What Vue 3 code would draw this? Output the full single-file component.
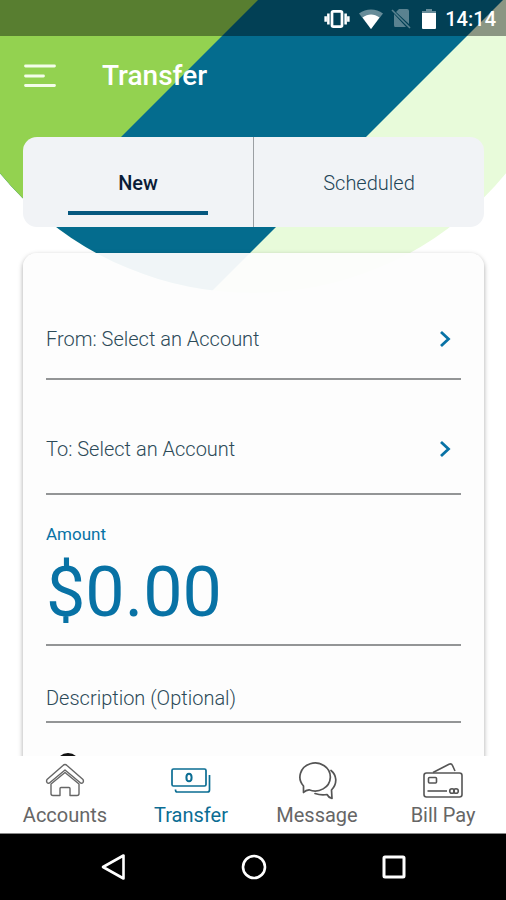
<script setup>
import { ref } from 'vue'

const mode = ref('new')
const amount = ref('$0.00')
const description = ref('')
</script>

<template>
  <div class="screen">
    <svg class="backdrop" viewBox="0 0 506 300" aria-hidden="true">
      <defs>
        <clipPath id="dome"><circle cx="253" cy="-34" r="327" /></clipPath>
      </defs>
      <g clip-path="url(#dome)">
        <rect width="506" height="300" fill="#e8fbda" />
        <path d="M0 0H503L203 300H0Z" fill="#046c8e" />
        <path d="M0 0H258L0 258Z" fill="#93d250" />
      </g>
    </svg>

    <div class="status">
      <svg class="s-vibrate" viewBox="0 0 28 22" aria-hidden="true">
        <rect x="8.500" y="2.500" width="11" height="17" rx="1.500" fill="none" stroke="#fff" stroke-width="3" />
        <path d="M4.500 5v12M23.500 5v12M1.500 8v6M26.500 8v6" stroke="#fff" stroke-width="2.800" />
      </svg>
      <svg class="s-wifi" viewBox="0 0 24 20" aria-hidden="true">
        <path d="M0 4.500C7-1 17-1 24 4.500L12 20Z" fill="#fff" opacity=".4" />
        <path d="M3.500 8.500C9 4.500 15 4.500 20.500 8.500L12 20Z" fill="#fff" />
      </svg>
      <svg class="s-sim" viewBox="0 0 20 22" aria-hidden="true">
        <path d="M8 1h8q2 0 2 2v13L5 4ZM3 6L15 19H4q-1 0-1-2Z" fill="#fff" opacity=".35" />
        <path d="M1 2L19 20" stroke="#fff" stroke-width="1.600" opacity=".35" />
      </svg>
      <svg class="s-battery" viewBox="0 0 14 20" aria-hidden="true">
        <path d="M4 0h6v2h4v3H0V2h4Z" fill="#fff" opacity=".4" />
        <path d="M0 4h14v15q0 1-1 1H1q-1 0-1-1Z" fill="#fff" />
      </svg>
      <span>14:14</span>
    </div>

    <header class="bar">
      <button class="menu" type="button" aria-label="Menu">
        <svg viewBox="0 0 32 24" aria-hidden="true">
          <path d="M1.500 2H30.500M1.500 12H19.500M1.500 21.500H30.500" stroke="#f4fde9" stroke-width="2.800" stroke-linecap="round" />
        </svg>
      </button>
      <h1>Transfer</h1>
    </header>

    <div class="tabs" role="tablist">
      <button type="button" role="tab" :aria-selected="mode === 'new'" @click="mode = 'new'"><span>New</span></button>
      <button type="button" role="tab" :aria-selected="mode === 'scheduled'" @click="mode = 'scheduled'"><span>Scheduled</span></button>
    </div>

    <main class="scroll">
      <form class="card" @submit.prevent>
        <button class="pick from" type="button">
          <span>From: Select an Account</span>
          <svg viewBox="0 0 12 18" aria-hidden="true"><path d="M2 2L9.500 9L2 16" fill="none" stroke="#0872a5" stroke-width="2.800" /></svg>
        </button>
        <button class="pick to" type="button">
          <span>To: Select an Account</span>
          <svg viewBox="0 0 12 18" aria-hidden="true"><path d="M2 2L9.500 9L2 16" fill="none" stroke="#0872a5" stroke-width="2.800" /></svg>
        </button>
        <div class="amount">
          <label for="amount">Amount</label>
          <input id="amount" v-model="amount" type="text" inputmode="decimal" />
        </div>
        <input v-model="description" class="description" type="text" placeholder="Description (Optional)" aria-label="Description (Optional)" />
        <div class="frequency">
          <svg viewBox="0 0 24 24" aria-hidden="true"><circle cx="12" cy="12" r="10.500" fill="none" stroke="#111" stroke-width="3" /></svg>
        </div>
      </form>
    </main>

    <nav class="tabbar">
      <a href="#accounts">
        <svg viewBox="0 0 40 40" aria-hidden="true">
          <g fill="none" stroke="#666" stroke-width="1.400" stroke-linejoin="round">
            <path d="M20 3.500Q21 3.500 22 4.500L38 18.500Q39 20 38 21.500Q36.500 23 35 21.500L20 9L5 21.500Q3.500 23 2 21.500Q1 20 2 18.500L18 4.500Q19 3.500 20 3.500Z" />
            <path d="M20 11.500L34 23V32.500Q34 34.500 32 34.500H25V27.500Q25 26.500 24 26.500H16Q15 26.500 15 27.500V34.500H8Q6 34.500 6 32.500V23Z" />
          </g>
        </svg>
        <span>Accounts</span>
      </a>
      <a class="active" href="#transfer">
        <svg viewBox="0 0 40 40" aria-hidden="true">
          <g fill="none" stroke="#0b6d93" stroke-width="1.700">
            <rect x="1" y="8" width="34" height="17" rx="1.500" />
            <path d="M38.500 14V29Q38.500 31 36.500 31H6Q4.500 31 4.500 28.500" />
            <ellipse cx="18" cy="16.500" rx="2.600" ry="3.800" stroke-width="2" />
          </g>
        </svg>
        <span>Transfer</span>
      </a>
      <a href="#message">
        <svg viewBox="0 0 40 40" aria-hidden="true">
          <g fill="none" stroke="#555" stroke-width="1.700" stroke-linejoin="round" stroke-linecap="round">
            <path d="M6.500 31.500L6.500 25A15.200 14 0 1 1 12 28.800Q9 29 6.500 31.500Z" />
            <path d="M34 9.500C39.500 14 41 22 34.500 29L35 37.500Q31.500 36.500 30 33.500Q24 34.500 18 32.500" />
          </g>
        </svg>
        <span>Message</span>
      </a>
      <a href="#billpay">
        <svg viewBox="0 0 40 40" aria-hidden="true">
          <g fill="none" stroke="#555" stroke-width="1.600" stroke-linejoin="round">
            <rect x="1" y="12" width="38" height="24" rx="2.500" />
            <path d="M10 11.500L26 3.200Q28.500 2.200 29.500 4.500L32 10" />
            <rect x="5.500" y="16.500" width="8" height="5.500" rx="1" />
            <path d="M4.500 30H24" />
            <circle cx="29" cy="30" r="2.300" />
            <circle cx="33" cy="30" r="2.300" />
          </g>
        </svg>
        <span>Bill Pay</span>
      </a>
    </nav>

    <div class="system">
      <button type="button" aria-label="Back">
        <svg viewBox="0 0 28 28" aria-hidden="true"><path d="M23.500 2.500V25.500L3 14Z" fill="none" stroke="#fff" stroke-width="2.600" stroke-linejoin="round" /></svg>
      </button>
      <button type="button" aria-label="Home">
        <svg viewBox="0 0 28 28" aria-hidden="true"><circle cx="14" cy="14" r="11" fill="none" stroke="#fff" stroke-width="2.600" /></svg>
      </button>
      <button type="button" aria-label="Recent apps">
        <svg viewBox="0 0 28 28" aria-hidden="true"><rect x="4" y="4" width="20" height="20" rx="1" fill="none" stroke="#fff" stroke-width="3" /></svg>
      </button>
    </div>
  </div>
</template>

<style>
body {
  margin: 0;
  background: #fff;
}
</style>

<style scoped>
.screen {
  position: relative;
  display: flex;
  flex-direction: column;
  height: 100vh;
  overflow: hidden;
  font-family: Roboto, "Liberation Sans", sans-serif;
  isolation: isolate;
}
button,
input {
  box-sizing: border-box;
  border: 0;
  padding: 0;
  margin: 0;
  background: none;
  font: inherit;
  color: inherit;
  text-align: left;
}
svg {
  display: block;
  flex: none;
}
.backdrop {
  position: absolute;
  top: 0;
  left: 0;
  width: 100%;
  z-index: -1;
}
.status {
  display: flex;
  align-items: center;
  justify-content: flex-end;
  box-sizing: border-box;
  height: 36px;
  padding: 1px 10px 0 0;
  background: rgba(0, 0, 0, 0.4);
  color: #fff;
  font-size: 20px;
  font-weight: 500;
}
.s-vibrate {
  width: 26px;
  height: 20px;
  margin-right: 9px;
}
.s-wifi {
  width: 24px;
  height: 20px;
  margin-right: 8px;
}
.s-sim {
  width: 20px;
  height: 22px;
  margin-right: 11px;
}
.s-battery {
  width: 14px;
  height: 20px;
  margin-right: 9px;
}
.bar {
  display: flex;
  align-items: center;
  gap: 46px;
  height: 80px;
  padding: 0 24px;
  margin-bottom: 21px;
  color: #fff;
}
.menu svg {
  width: 32px;
  height: 24px;
}
h1 {
  margin: 0;
  font-size: 28px;
  line-height: 32px;
  font-weight: 500;
}
.tabs {
  display: flex;
  margin: 0 22px 0 23px;
  height: 90px;
  flex: none;
  border-radius: 14px;
  background: #f1f3f6;
}
.tabs button {
  display: flex;
  flex: 1;
  justify-content: center;
  padding: 32px 45px 12px;
  font-size: 20px;
  line-height: 28px;
  font-weight: 300;
  color: #1f4557;
}
.tabs button + button {
  border-left: 1px solid #9b9fa3;
}
.tabs span {
  flex: 1;
  text-align: center;
}
.tabs [aria-selected="true"] {
  font-weight: 500;
  color: #0a1c38;
}
.tabs [aria-selected="true"] span {
  border-bottom: 4px solid #06587f;
}
.scroll {
  flex: 1;
  min-height: 0;
  overflow: hidden;
  padding: 26px 22px 0 23px;
}
.card {
  display: flex;
  flex-direction: column;
  padding: 0 23px 40px;
  border-radius: 14px;
  background: rgba(253, 253, 253, 0.95);
  box-shadow: 0 2px 5px rgba(0, 0, 0, 0.35);
  color: #2c4a58;
  font-size: 20px;
  font-weight: 300;
}
.pick {
  display: flex;
  align-items: center;
  justify-content: space-between;
  padding: 30px 10px 30px 0;
  line-height: 24px;
  border-bottom: 2px solid #939596;
}
.pick svg {
  width: 12px;
  height: 18px;
}
.from {
  margin-top: 44px;
  padding-bottom: 27px;
}
.to {
  margin-top: 27px;
  padding-bottom: 32px;
}
.amount {
  display: flex;
  flex-direction: column;
  padding-top: 27px;
  border-bottom: 2px solid #939596;
  color: #0872a5;
}
.amount label {
  font-size: 17px;
  line-height: 24px;
  font-weight: 400;
}
.amount input {
  width: 100%;
  height: 98px;
  padding-bottom: 6px;
  font-size: 70px;
  font-weight: 400;
}
.description {
  width: 100%;
  height: 77px;
  padding-top: 28px;
  border-bottom: 2px solid #939596;
}
.description::placeholder {
  color: inherit;
  opacity: 1;
}
.frequency {
  padding: 30px 10px;
}
.frequency svg {
  width: 24px;
  height: 24px;
}
.tabbar {
  display: flex;
  flex: none;
  height: 77px;
  padding-left: 2px;
  background: #fff;
  border-bottom: 1px solid #888;
}
.tabbar a {
  display: flex;
  flex: 1;
  flex-direction: column;
  align-items: center;
  padding-top: 5px;
  color: #666;
  text-decoration: none;
  font-size: 20px;
  line-height: 28px;
}
.tabbar svg {
  width: 40px;
  height: 40px;
}
.tabbar .active {
  color: #0b6d93;
}
.system {
  display: flex;
  justify-content: space-around;
  align-items: center;
  height: 66px;
  flex: none;
  padding: 0 42px 0 44px;
  background: #000;
}
.system svg {
  width: 28px;
  height: 28px;
}
</style>
